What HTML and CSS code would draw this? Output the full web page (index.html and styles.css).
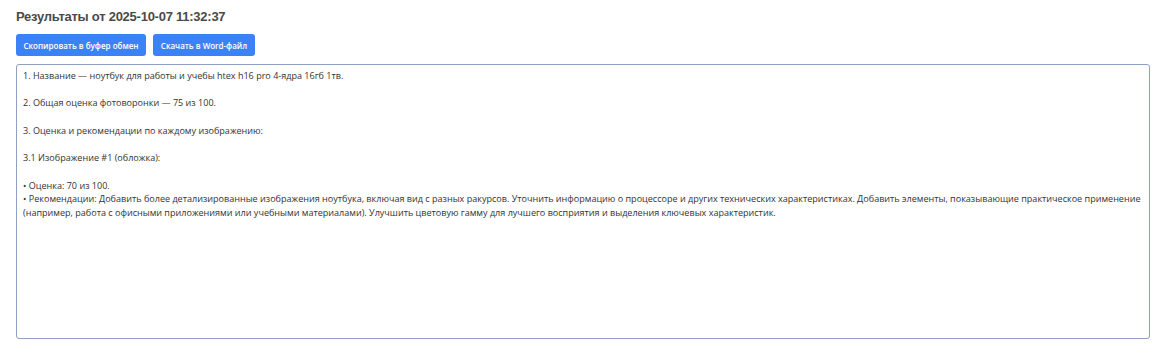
FILE: index.html
```html
<!DOCTYPE html>
<html lang="ru">
<head>
<meta charset="utf-8">
<link rel="stylesheet" href="styles.css">
</head>
<body>
<div class="page">
  <h2 class="title">Результаты от 2025-10-07 11:32:37</h2>
  <div class="actions">
    <button class="btn btn-copy">Скопировать в буфер обмен</button>
    <button class="btn btn-word">Скачать в Word-файл</button>
  </div>
  <textarea class="result" readonly>1. Название — ноутбук для работы и учебы htex h16 pro 4-ядра 16гб 1тв.

2. Общая оценка фотоворонки — 75 из 100.

3. Оценка и рекомендации по каждому изображению:

3.1 Изображение #1 (обложка):

• Оценка: 70 из 100.
• Рекомендации: Добавить более детализированные изображения ноутбука, включая вид с разных ракурсов. Уточнить информацию о процессоре и других технических характеристиках. Добавить элементы, показывающие практическое применение (например, работа с офисными приложениями или учебными материалами). Улучшить цветовую гамму для лучшего восприятия и выделения ключевых характеристик.</textarea>
</div>
</body>
</html>
```

FILE: styles.css
```css
html, body {
  margin: 0;
  padding: 0;
  background: #ffffff;
}

.page {
  padding: 7px 16px 0 16px;
  font-family: "Liberation Sans", Arial, sans-serif;
}

.title {
  margin: 0;
  font-size: 13px;
  line-height: 19px;
  font-weight: 700;
  letter-spacing: -0.25px;
  color: #4a4a4a;
}

.actions {
  display: flex;
  gap: 7px;
  margin-top: 8px;
}

.btn {
  height: 22px;
  padding: 0;
  border: none;
  border-radius: 3px;
  background: #3b82f6;
  color: #ffffff;
  font-family: "Open Sans", "Noto Sans", sans-serif;
  font-size: 8px;
  font-weight: 600;
  white-space: nowrap;
  text-align: center;
  cursor: pointer;
}

.btn-copy { width: 130px; }
.btn-word { width: 102px; }

.result {
  display: block;
  box-sizing: border-box;
  width: 1134px;
  height: 275px;
  margin-top: 8px;
  padding: 4px 6px;
  border: 1px solid #8ea1c2;
  border-radius: 3px;
  resize: none;
  outline: none;
  font-family: "Open Sans", "Noto Sans", sans-serif;
  font-size: 9.05px;
  line-height: 13.7px;
  color: #333333;
  background: #ffffff;
  overflow: hidden;
}
```
